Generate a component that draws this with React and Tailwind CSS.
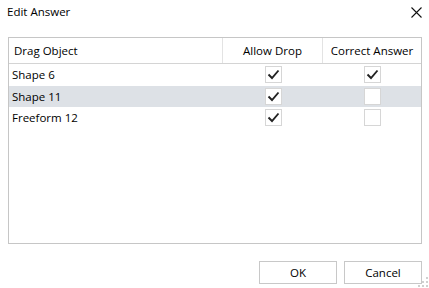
const rows = [
  { name: 'Shape 6', allow: true, correct: true },
  { name: 'Shape 11', allow: true, correct: false, selected: true },
  { name: 'Freeform 12', allow: true, correct: false },
]

const Check = ({ checked }) => (
  <div className="w-[17px] h-[17px] border border-[#d6d6d6] bg-white flex items-center justify-center">
    {checked && (
      <svg width="13" height="11" viewBox="0 0 13 11">
        <path d="M1.5 5.5 L5 9 L11.5 1.5" fill="none" stroke="#222" strokeWidth="1.9" />
      </svg>
    )}
  </div>
)

const App = () => {
  return (
    <div className="w-[429px] h-[288px] bg-white relative text-[11.5px] text-black" style={{ fontFamily: '"Open Sans", "Noto Sans", sans-serif' }}>
      {/* Title bar */}
      <div className="h-[37px] flex items-start justify-between pl-[7px] pr-[7px] pt-[3px]">
        <span>Edit Answer</span>
        <svg className="mt-[4px]" width="11" height="11" viewBox="0 0 11 11">
          <path d="M0.5 0.5 L10.5 10.5 M10.5 0.5 L0.5 10.5" stroke="#111" strokeWidth="1.1" />
        </svg>
      </div>

      {/* Table */}
      <div className="ml-[8px] w-[414px] h-[207px] border border-[#c6c6c6]">
        <div className="grid grid-cols-[213px_100px_1fr] h-[26px] border-b border-[#d4d4d4]">
          <div className="pl-[5px] flex items-center">Drag Object</div>
          <div className="border-l border-[#e3e3e3] flex items-center justify-center">Allow Drop</div>
          <div className="border-l border-[#e3e3e3] flex items-center justify-center">Correct Answer</div>
        </div>
        {rows.map((row) => (
          <div key={row.name} className={`grid grid-cols-[213px_100px_1fr] h-[21.5px] ${row.selected ? 'bg-[#dde1e6]' : ''}`}>
            <div className="pl-[3px] flex items-center">{row.name}</div>
            <div className="flex items-center justify-center pl-[2px]"><Check checked={row.allow} /></div>
            <div className="flex items-center justify-center pl-[2px]"><Check checked={row.correct} /></div>
          </div>
        ))}
      </div>

      {/* Buttons */}
      <div className="flex justify-end gap-[7px] pr-[7px] mt-[17px]">
        <button className="w-[78px] h-[23px] border border-[#c8c8c8] bg-white">OK</button>
        <button className="w-[78px] h-[23px] border border-[#c8c8c8] bg-white">Cancel</button>
      </div>

      {/* Resize grip */}
      <svg className="absolute right-[1px] bottom-[1px]" width="10" height="10" viewBox="0 0 10 10">
        <rect x="8" y="0" width="2" height="2" fill="#d0d0d0" />
        <rect x="4" y="4" width="2" height="2" fill="#d0d0d0" />
        <rect x="8" y="4" width="2" height="2" fill="#d0d0d0" />
        <rect x="0" y="8" width="2" height="2" fill="#d0d0d0" />
        <rect x="4" y="8" width="2" height="2" fill="#d0d0d0" />
        <rect x="8" y="8" width="2" height="2" fill="#d0d0d0" />
      </svg>
    </div>
  )
}

export default App
